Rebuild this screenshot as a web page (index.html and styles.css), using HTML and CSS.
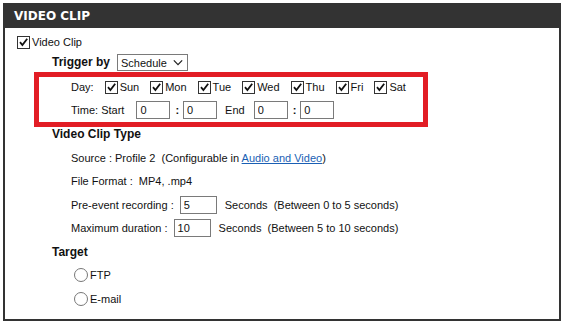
FILE: index.html
```html
<!DOCTYPE html>
<html lang="en">
<head>
<meta charset="UTF-8" />
<title>Video Clip</title>
<link rel="stylesheet" href="styles.css">
</head>
<body>
  <div class="panel">
    <div class="panel-title">VIDEO CLIP</div>

    <div class="panel-body">
      <!-- Master switch -->
      <label class="row row-top">
        <span class="check on"><svg viewBox="0 0 11 11"><path d="M2 5.2 L4.4 8 L9.2 1.8" /></svg></span>
        <span class="check-text">Video Clip</span>
      </label>

      <div class="row row-trigger">
        <span class="bold">Trigger by</span>
        <div class="select">
          <span>Schedule</span>
          <svg class="chevron" viewBox="0 0 12 8"><path d="M1 1.5 L6 6.5 L11 1.5" /></svg>
        </div>
      </div>

      <!-- Highlighted schedule box -->
      <div class="schedule">
        <div class="sched-row">
          <span class="sched-label">Day:</span>
          <label class="day"><span class="check on"><svg viewBox="0 0 11 11"><path d="M2 5.2 L4.4 8 L9.2 1.8" /></svg></span>Sun</label>
          <label class="day"><span class="check on"><svg viewBox="0 0 11 11"><path d="M2 5.2 L4.4 8 L9.2 1.8" /></svg></span>Mon</label>
          <label class="day"><span class="check on"><svg viewBox="0 0 11 11"><path d="M2 5.2 L4.4 8 L9.2 1.8" /></svg></span>Tue</label>
          <label class="day"><span class="check on"><svg viewBox="0 0 11 11"><path d="M2 5.2 L4.4 8 L9.2 1.8" /></svg></span>Wed</label>
          <label class="day"><span class="check on"><svg viewBox="0 0 11 11"><path d="M2 5.2 L4.4 8 L9.2 1.8" /></svg></span>Thu</label>
          <label class="day"><span class="check on"><svg viewBox="0 0 11 11"><path d="M2 5.2 L4.4 8 L9.2 1.8" /></svg></span>Fri</label>
          <label class="day"><span class="check on"><svg viewBox="0 0 11 11"><path d="M2 5.2 L4.4 8 L9.2 1.8" /></svg></span>Sat</label>
        </div>
        <div class="sched-row">
          <span class="time-label">Time: Start</span>
          <input class="box" type="text" value="0" />
          <span class="colon">:</span>
          <input class="box" type="text" value="0" />
          <span class="end-label">End</span>
          <input class="box" type="text" value="0" />
          <span class="colon">:</span>
          <input class="box" type="text" value="0" />
        </div>
      </div>

      <div class="row row-heading bold">Video Clip Type</div>

      <div class="list">
        <div class="row sub"><span>Source : Profile 2&nbsp;&nbsp;(Configurable in <a href="#">Audio and Video</a>)</span></div>
        <div class="row sub"><span>File Format :&nbsp;&nbsp;MP4, .mp4</span></div>
        <div class="row sub">
          <span>Pre-event recording :</span>
          <input class="box num" type="text" value="5" />
          <span>Seconds&nbsp;&nbsp;(Between 0 to 5 seconds)</span>
        </div>
        <div class="row sub">
          <span>Maximum duration :</span>
          <input class="box num" type="text" value="10" />
          <span>Seconds&nbsp;&nbsp;(Between 5 to 10 seconds)</span>
        </div>
        <div class="row bold">Target</div>
        <label class="row radio-row"><span class="radio"></span>FTP</label>
        <label class="row radio-row"><span class="radio"></span>E-mail</label>
      </div>
    </div>
  </div>
</body>
</html>
```

FILE: styles.css
```css
body {
  margin: 0;
  padding: 3px;
  background: #fff;
  font-family: "Liberation Sans", Arial, sans-serif;
  font-size: 11px;
  color: #111;
}

.panel {
  width: 554px;
  border: 2px solid #333;
  border-top: none;
  height: 316px;
  box-sizing: content-box;
}

.panel-title {
  height: 25px;
  line-height: 26px;
  background: #333;
  color: #fff;
  font-family: "DejaVu Sans", Verdana, sans-serif;
  font-weight: bold;
  font-size: 12px;
  margin: 0 -2px;
  padding-left: 11px;
}

.panel-body {
  padding: 4px 0 0 12px;
}

.row {
  display: flex;
  align-items: center;
  height: 23.5px;
  white-space: nowrap;
}

.bold {
  font-weight: bold;
  font-size: 12px;
}

.row-top {
  height: 20px;
}

.check {
  width: 11px;
  height: 11px;
  border: 1px solid #333;
  background: #fff;
  display: inline-flex;
  flex: none;
}
.check svg {
  width: 11px;
  height: 11px;
  fill: none;
  stroke: #111;
  stroke-width: 1.8;
}
.check-text {
  margin-left: 2px;
}

.row-trigger {
  height: 20px;
  padding-left: 35px;
  gap: 7px;
}

.select {
  display: flex;
  align-items: center;
  gap: 6px;
  height: 15px;
  padding: 0 4px 0 3px;
  border: 1px solid #7a7a7a;
  font-size: 11px;
  font-weight: normal;
  margin-top: 1px;
}
.chevron {
  width: 10px;
  height: 7px;
  fill: none;
  stroke: #222;
  stroke-width: 1.5;
}

/* red highlight round the schedule */
.schedule {
  margin-left: 17px;
  width: 384px;
  border: 5px solid #e21d25;
  padding: 0 0 2px 0;
}

.sched-row {
  display: flex;
  align-items: center;
  height: 20px;
  padding-left: 32px;
  white-space: nowrap;
}
.sched-row + .sched-row {
  margin-top: 3px;
}

.sched-label {
  margin-right: 11px;
}

.day {
  display: flex;
  align-items: center;
  gap: 2px;
  margin-right: 11px;
}

.time-label {
  margin-right: 12px;
}

.box {
  width: 34px;
  height: 18px;
  box-sizing: border-box;
  border: 1px solid #7a7a7a;
  padding: 0 3px;
  font-family: inherit;
  font-size: 11px;
  color: #111;
  outline: none;
}

.colon {
  font-weight: bold;
  margin: 0 4px 0 5px;
}

.end-label {
  margin: 0 9px 0 8px;
}

.row-heading {
  height: 14px;
  padding-left: 35px;
}

.list {
  margin-top: 5px;
  padding-left: 35px;
}

.sub {
  padding-left: 19px;
}
.sub .num {
  margin: 0 8px 0 6px;
  width: 37px;
}

a {
  color: #1a5fb4;
}

.radio-row {
  padding-left: 22px;
  gap: 2px;
}
.radio {
  width: 12px;
  height: 12px;
  border: 1px solid #777;
  border-radius: 50%;
  background: #fff;
  flex: none;
}
```
